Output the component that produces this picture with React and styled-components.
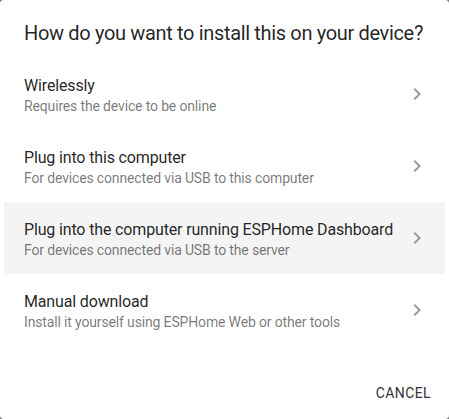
import React from 'react';
import styled, { createGlobalStyle } from 'styled-components';

const GlobalStyle = createGlobalStyle`
  html, body {
    margin: 0;
    padding: 0;
    background: #7a7a7a;
  }
  body {
    font-family: Roboto, "Noto Sans", sans-serif;
    -webkit-font-smoothing: antialiased;
  }
`;

const Dialog = styled.div`
  width: 449px;
  height: 419px;
  background: #fff;
  border-radius: 4px;
  display: flex;
  flex-direction: column;
  box-sizing: border-box;
  overflow: hidden;
`;

const Title = styled.h2`
  margin: 0;
  padding: 17px 24px 0;
  font-size: 20px;
  line-height: 32px;
  font-weight: 400;
  letter-spacing: -0.34px;
  white-space: nowrap;
  color: rgba(0, 0, 0, 0.87);
`;

const List = styled.ul`
  list-style: none;
  margin: 0;
  padding: 9px 0 8px;
`;

const Item = styled.li`
  height: 72px;
  margin: 0 4px;
  padding: 0 16px 0 20px;
  display: flex;
  align-items: center;
  background: ${({ $active }) => ($active ? '#f4f4f4' : 'transparent')};
  cursor: pointer;
`;

const Text = styled.div`
  flex: 1;
  display: flex;
  flex-direction: column;
  padding-top: 3px;
`;

const Primary = styled.span`
  font-size: 16px;
  line-height: 20px;
  letter-spacing: -0.15px;
  color: rgba(0, 0, 0, 0.87);
`;

const Secondary = styled.span`
  font-size: 14px;
  line-height: 20px;
  letter-spacing: -0.15px;
  color: rgba(0, 0, 0, 0.54);
`;

const Chevron = styled.svg`
  width: 24px;
  height: 24px;
  flex: none;
  fill: #999;
`;

const Actions = styled.div`
  margin-top: auto;
  display: flex;
  justify-content: flex-end;
  padding: 8px 10px 8px;
`;

const Button = styled.button`
  border: 0;
  background: none;
  height: 36px;
  padding: 0 8px;
  font-family: inherit;
  font-size: 14px;
  letter-spacing: 0.4px;
  text-transform: uppercase;
  color: #333;
  cursor: pointer;
`;

const options = [
  { title: 'Wirelessly', sub: 'Requires the device to be online' },
  { title: 'Plug into this computer', sub: 'For devices connected via USB to this computer' },
  {
    title: 'Plug into the computer running ESPHome Dashboard',
    sub: 'For devices connected via USB to the server',
    active: true,
  },
  { title: 'Manual download', sub: 'Install it yourself using ESPHome Web or other tools' },
];

export default function App() {
  return (
    <>
      <GlobalStyle />
      <Dialog>
        <Title>How do you want to install this on your device?</Title>
        <List>
          {options.map((o) => (
            <Item key={o.title} $active={o.active}>
              <Text>
                <Primary>{o.title}</Primary>
                <Secondary>{o.sub}</Secondary>
              </Text>
              <Chevron viewBox="0 0 24 24">
                <path d="M10 6L8.59 7.41 13.17 12l-4.58 4.59L10 18l6-6z" />
              </Chevron>
            </Item>
          ))}
        </List>
        <Actions>
          <Button>Cancel</Button>
        </Actions>
      </Dialog>
    </>
  );
}
